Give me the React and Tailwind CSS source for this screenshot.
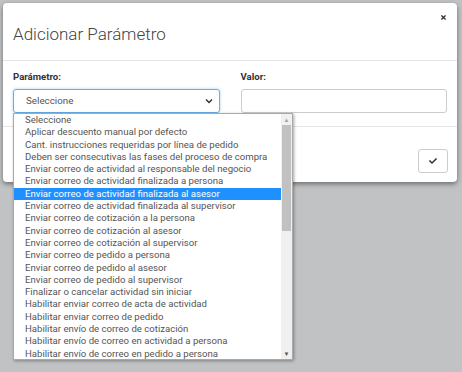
import React from 'react'
import { FaTimes, FaCheck } from 'react-icons/fa'

const options = [
    'Seleccione',
    'Aplicar descuento manual por defecto',
    'Cant. instrucciones requeridas por línea de pedido',
    'Deben ser consecutivas las fases del proceso de compra',
    'Enviar correo de actividad al responsable del negocio',
    'Enviar correo de actividad finalizada a persona',
    'Enviar correo de actividad finalizada al asesor',
    'Enviar correo de actividad finalizada al supervisor',
    'Enviar correo de cotización a la persona',
    'Enviar correo de cotización al asesor',
    'Enviar correo de cotización al supervisor',
    'Enviar correo de pedido a persona',
    'Enviar correo de pedido al asesor',
    'Enviar correo de pedido al supervisor',
    'Finalizar o cancelar actividad sin iniciar',
    'Habilitar enviar correo de acta de actividad',
    'Habilitar enviar correo de pedido',
    'Habilitar envío de correo de cotización',
    'Habilitar envío de correo en actividad a persona',
    'Habilitar envío de correo en pedido a persona',
]

// open native-looking option list under the select
function OptionList() {
    return (
        <div className="absolute left-[13px] top-[113px] w-[280px] h-[247px] bg-white border border-[#a9a9a9] shadow-[1px_1px_3px_rgba(0,0,0,0.35)] flex">
            <ul className="flex-1 overflow-hidden">
                {options.map((opt, i) => (
                    <li
                        key={i}
                        className={
                            i === 6
                                ? 'h-[12.3px] leading-[12.3px] pl-[11px] text-[9.6px] whitespace-nowrap bg-[#1e90ff] text-white'
                                : 'h-[12.3px] leading-[12.3px] pl-[11px] text-[9.6px] whitespace-nowrap text-[#555]'
                        }
                    >
                        {opt}
                    </li>
                ))}
            </ul>
            <div className="w-[11px] bg-[#f0f0f0] flex flex-col items-center">
                <div className="h-[11px] flex items-center justify-center text-[#a3a3a3] text-[6px]">▲</div>
                <div className="w-[9px] h-[106px] bg-[#c1c1c1]"></div>
                <div className="flex-1"></div>
                <div className="h-[11px] flex items-center justify-center text-[#505050] text-[6px]">▼</div>
            </div>
        </div>
    )
}

export default function App() {
    return (
        <div className="relative w-[462px] h-[372px] overflow-hidden bg-[#c1c2c4] font-['Roboto',sans-serif] pt-[3px] pl-[3px]">
            <div className="w-[454px] bg-white rounded-[4px] shadow-[0_2px_5px_rgba(0,0,0,0.45)]">
                <div className="relative h-[58px] px-[10px] flex items-center border-b border-[#e5e5e5]">
                    <h4 className="text-[17px] font-light text-[#444] pt-[6px]">Adicionar Parámetro</h4>
                    <FaTimes className="absolute right-[10px] top-[11px] text-[#333]" size={7} />
                </div>
                <div className="px-[10px] pt-[9px] pb-[13px] grid grid-cols-2 gap-[21px]">
                    <div>
                        <label className="block text-[9.6px] font-bold text-[#333] mb-[5px]">Parámetro:</label>
                        <div className="h-[24px] border border-[#66afe9] rounded-[3px] shadow-[0_0_3px_rgba(102,175,233,0.6)] flex items-center justify-between pl-[12px] pr-[6px]">
                            <span className="text-[9.8px] text-[#555]">Seleccione</span>
                            <svg width="8" height="6" viewBox="0 0 8 6">
                                <path d="M1 1.5 L4 4.5 L7 1.5" fill="none" stroke="#333" strokeWidth="1.5" />
                            </svg>
                        </div>
                    </div>
                    <div>
                        <label className="block text-[9.6px] font-bold text-[#333] mb-[5px]">Valor:</label>
                        <div className="h-[24px] border border-[#ccc] rounded-[3px]"></div>
                    </div>
                </div>
                <div className="border-t border-[#e5e5e5] h-[56px] flex justify-end items-start pt-[22px] pr-[9px]">
                    <button className="w-[30px] h-[24px] border border-[#ccc] rounded-[3px] bg-white flex items-center justify-center">
                        <FaCheck className="text-[#333]" size={8} />
                    </button>
                </div>
            </div>
            <OptionList />
        </div>
    )
}
